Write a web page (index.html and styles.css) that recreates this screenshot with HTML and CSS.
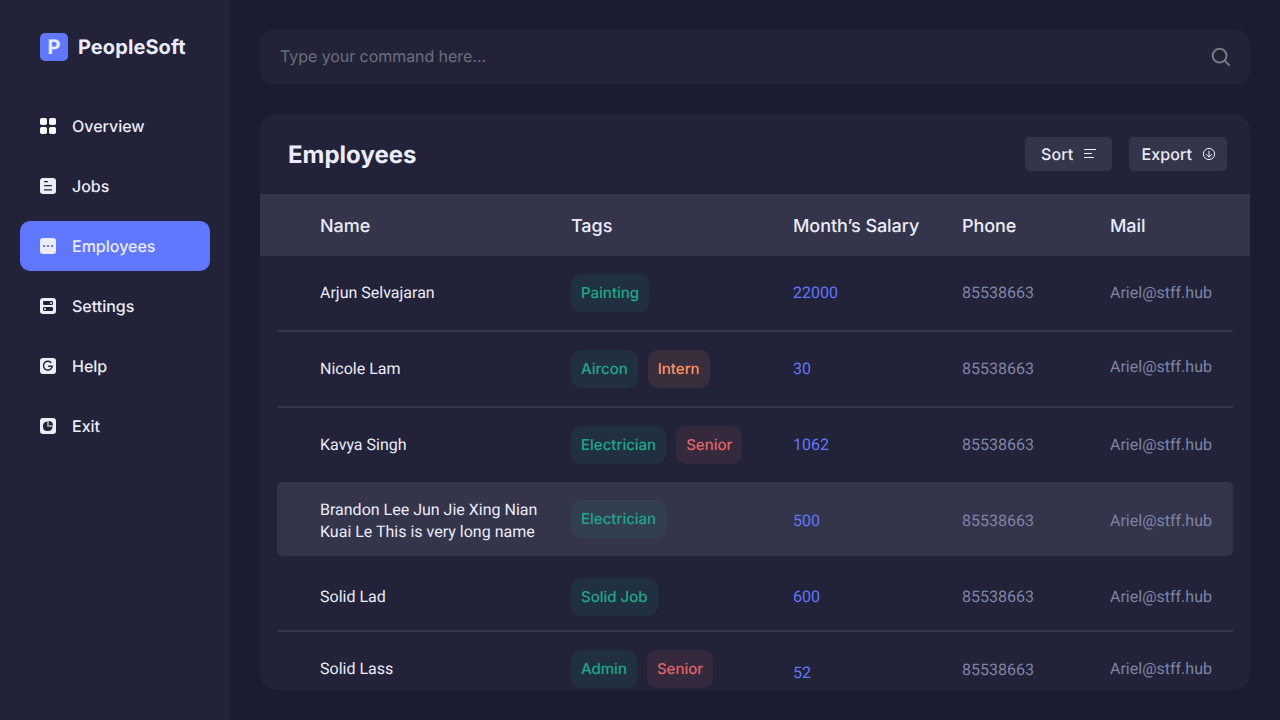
FILE: index.html
```html
<!DOCTYPE html>
<html lang="en">
<head>
<meta charset="utf-8">
<title>PeopleSoft</title>
<link rel="stylesheet" href="styles.css">
</head>
<body>
<div class="app">
  <aside class="sidebar">
    <div class="brand"><span class="brand-mark">P</span><span class="brand-name">PeopleSoft</span></div>
    <nav class="nav">
      <a class="nav-item"><svg class="nav-icon" viewBox="0 0 16 16"><g fill="#fff"><rect width="7" height="7" rx="1.8"/><rect x="9" width="7" height="7" rx="1.8"/><rect y="9" width="7" height="7" rx="1.8"/><rect x="9" y="9" width="7" height="7" rx="1.8"/></g></svg><span>Overview</span></a>
      <a class="nav-item"><svg class="nav-icon" viewBox="0 0 16 16"><rect class="tile" width="16" height="16" rx="3"/><path class="ink-line" stroke-width="1.3" d="M4.6 3.7h2.8M4.6 7.6h6.8M4.6 11.9h6.8"/></svg><span>Jobs</span></a>
      <a class="nav-item active"><svg class="nav-icon" viewBox="0 0 16 16"><rect class="tile" width="16" height="16" rx="3"/><path fill="#6077ff" d="M3 7h2v2H3zM7 7h2v2H7zM11 7h2v2h-2z"/></svg><span>Employees</span></a>
      <a class="nav-item"><svg class="nav-icon" viewBox="0 0 16 16"><rect class="tile" width="16" height="16" rx="3"/><rect class="ink" x="3" y="3" width="10" height="4" rx="1.2"/><rect class="ink" x="3" y="9" width="10" height="4" rx="1.2"/><circle class="tile" cx="11" cy="5" r="1"/><circle class="tile" cx="5" cy="11" r="1"/></svg><span>Settings</span></a>
      <a class="nav-item"><svg class="nav-icon" viewBox="0 0 16 16"><rect class="tile" width="16" height="16" rx="3"/><path class="ink-line" stroke-width="1.4" d="M10.9 4.4A4.4 4.4 0 1 0 12.3 8.2H8.6"/></svg><span>Help</span></a>
      <a class="nav-item"><svg class="nav-icon" viewBox="0 0 16 16"><rect class="tile" width="16" height="16" rx="3"/><path class="ink" d="M7.3 3.5V8.7H12.5A4.8 4.8 0 1 1 7.3 3.5z"/><path class="ink" d="M8.6 3A4.5 4.5 0 0 1 13 7.4H8.6z"/><path fill="#8a8b9d" d="M7.3 3.5h1.3v3.9H13v1.3H7.3z"/></svg><span>Exit</span></a>
    </nav>
  </aside>
  <main class="main">
    <div class="search"><span>Type your command here...</span><svg class="search-icon" viewBox="0 0 20 20"><circle cx="8.6" cy="8.6" r="6.9"/><path d="M13.8 13.8L18 18"/></svg></div>
    <section class="card">
      <header class="card-head">
        <h1 class="card-title">Employees</h1>
        <div class="actions">
          <button class="button sort"><span>Sort</span><svg class="sort-icon" viewBox="0 0 14 10"><path d="M1 .5h12M1 4.5h8M1 8.5h10"/></svg></button>
          <button class="button export"><span>Export</span><svg class="export-icon" viewBox="0 0 14 14"><circle cx="7" cy="7" r="5.6"/><path d="M7 3.5v6.8M4.1 7.2L7 10.2l2.9-3"/></svg></button>
        </div>
      </header>
      <div class="grid table-head"><span>Name</span><span>Tags</span><span>Month’s Salary</span><span>Phone</span><span>Mail</span></div>
      <div class="rows">
        <div class="grid row"><span class="name">Arjun Selvajaran</span><div class="tags"><span class="tag green">Painting</span></div><span class="salary">22000</span><span class="muted">85538663</span><span class="muted">Ariel@stff.hub</span></div>
        <div class="grid row"><span class="name">Nicole Lam</span><div class="tags"><span class="tag green">Aircon</span><span class="tag orange">Intern</span></div><span class="salary">30</span><span class="muted">85538663</span><span class="muted raised">Ariel@stff.hub</span></div>
        <div class="grid row plain"><span class="name">Kavya Singh</span><div class="tags"><span class="tag green">Electrician</span><span class="tag red">Senior</span></div><span class="salary">1062</span><span class="muted">85538663</span><span class="muted">Ariel@stff.hub</span></div>
        <div class="grid row plain selected"><span class="name">Brandon Lee Jun Jie Xing Nian<br>Kuai Le This is very long name</span><div class="tags"><span class="tag green">Electrician</span></div><span class="salary">500</span><span class="muted">85538663</span><span class="muted">Ariel@stff.hub</span></div>
        <div class="grid row lowered"><span class="name">Solid Lad</span><div class="tags"><span class="tag green">Solid Job</span></div><span class="salary">600</span><span class="muted">85538663</span><span class="muted">Ariel@stff.hub</span></div>
        <div class="grid row plain last"><span class="name">Solid Lass</span><div class="tags"><span class="tag green">Admin</span><span class="tag red">Senior</span></div><span class="salary">52</span><span class="muted phone">85538663</span><span class="muted">Ariel@stff.hub</span></div>
      </div>
    </section>
  </main>
</div>
</body>
</html>
```
FILE: styles.css
```css
* { box-sizing: border-box; }
body { margin: 0; background: #1b1c30; color: #ebecfb; font: 16px/22px Inter, sans-serif; text-rendering: geometricPrecision; }
.app { display: flex; width: 1280px; height: 720px; overflow: hidden; }
.sidebar { width: 230px; flex: none; background: #222338; padding: 33px 20px 0; }
.brand { display: flex; align-items: center; gap: 10px; height: 28px; padding-left: 20px; font-size: 20px; font-weight: 700; line-height: 28px; }
.brand-name { letter-spacing: 0.08px; }
.brand-mark { width: 28px; height: 28px; border-radius: 5px; background: #6077ff; text-align: center; font-weight: 700; }
.nav { display: flex; flex-direction: column; gap: 10px; margin-top: 40px; }
.nav-item { display: flex; align-items: center; gap: 16px; height: 50px; padding-left: 20px; border-radius: 10px; font-weight: 500; }
.nav-item.active { background: #6077ff; }
.nav-icon { width: 16px; height: 16px; }
.tile { fill: #ebedfc; }
.ink { fill: #222338; }
.ink-line { fill: none; stroke: #222338; stroke-linecap: round; }
.main { flex: 1; padding: 30px; display: flex; flex-direction: column; gap: 30px; }
.search { display: flex; align-items: center; justify-content: space-between; height: 54px; padding: 0 19px 0 20px; border-radius: 12px; background: #222338; color: #6b6f7b; letter-spacing: -0.06px; }
.search span { padding-bottom: 2px; }
.search-icon { width: 20px; height: 20px; fill: none; stroke: #747980; stroke-width: 2; stroke-linecap: round; }
.card { height: 576px; border-radius: 16px; overflow: hidden; background: #222338; }
.card-head { display: flex; align-items: center; justify-content: space-between; height: 80px; padding: 0 23px 0 28px; }
.card-title { margin: 2px 0 0; font-size: 24px; line-height: 32px; font-weight: 700; }
.actions { display: flex; gap: 17px; }
.button { display: flex; align-items: center; height: 34px; padding: 0; border: 0; border-radius: 5px; background: #34344b; color: #ebecfb; font: 500 16px/22px Inter, sans-serif; letter-spacing: 0.1px; text-rendering: geometricPrecision; }
.sort { width: 87px; padding-left: 16px; gap: 9.5px; }
.export { width: 98px; padding-left: 12.5px; gap: 9.5px; }
.sort-icon { width: 14px; height: 10px; fill: none; stroke: #ecedfc; }
.export-icon { width: 14px; height: 14px; fill: none; stroke: #ecedfc; }
.grid { display: grid; grid-template-columns: 251px 222px 169px 148px 1fr; }
.table-head { height: 62px; align-items: center; padding: 4px 0 0 60px; background: #34344b; font-size: 18px; font-weight: 500; letter-spacing: -0.06px; }
.rows { padding: 0 17px; }
.row { height: 76px; align-items: start; padding: 26px 0 0 43px; border-bottom: 2px solid #34344b; font-family: Roboto, sans-serif; }
.plain { height: 74px; border-bottom: 0; }
.tags { display: flex; gap: 10px; margin-top: -8px; }
.tag { height: 38px; padding: 0 10px; border-radius: 10px; font: 500 15px/38px Inter, sans-serif; }
.green { color: #1ea78a; background: rgba(26, 171, 139, 0.1); }
.orange { color: #ff9364; background: rgba(255, 147, 100, 0.1); }
.red { color: #e16468; background: rgba(225, 100, 104, 0.1); }
.salary { color: #6077ff; }
.muted { color: #8083a8; }
.raised { margin-top: -2px; }
.selected { padding-top: 28px; border-radius: 5px; background: #34344b; }
.selected .name { margin-top: -11px; }
.selected .tags { margin-top: -10px; }
.lowered { padding-top: 30px; }
.last .salary { margin-top: 4px; }
.last .phone { margin-top: 1px; }
```
